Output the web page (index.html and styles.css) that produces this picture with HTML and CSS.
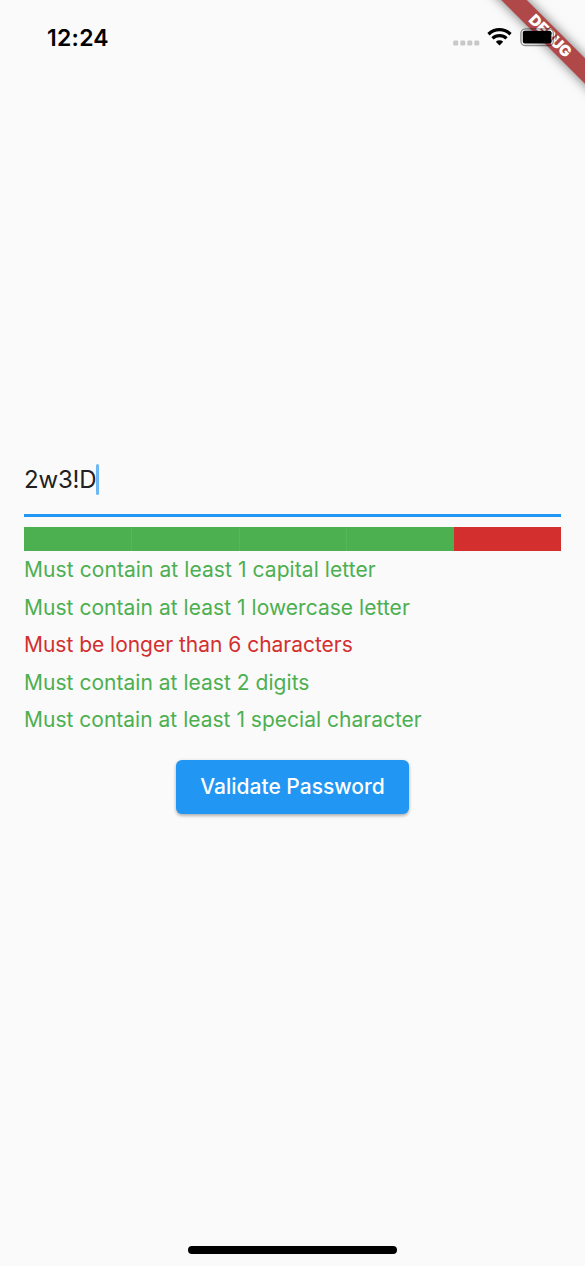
FILE: index.html
```html
<!DOCTYPE html>
<html lang="en">
<head>
<meta charset="utf-8">
<title>Password validator</title>
<link rel="stylesheet" href="styles.css">
</head>
<body>
<div class="screen">
  <header class="status-bar">
    <span class="clock">12:24</span>
    <div class="indicators">
      <svg class="signal" width="27" height="6" viewBox="0 0 27 6"><g fill="#c8c8c8"><rect x=".2" y=".6" width="5" height="5" rx="1.4"/><rect x="7.3" y=".6" width="5" height="5" rx="1.4"/><rect x="14.3" y=".6" width="5" height="5" rx="1.4"/><rect x="21.3" y=".6" width="5" height="5" rx="1.4"/></g></svg>
      <svg class="wifi" width="26" height="19" viewBox="0 0 26 19"><g fill="none" stroke="#000" stroke-width="3.3"><path d="M1.5 7.2a15.7 15.7 0 0 1 22 0"/><path d="M5.5 11.4a10 10 0 0 1 14 0"/></g><path d="M8.8 14.8a5.4 5.4 0 0 1 7.4 0L12.5 18.5Z"/></svg>
      <svg class="battery" width="38" height="19" viewBox="0 0 38 19"><rect x=".9" y=".9" width="32.5" height="16.6" rx="4.6" fill="none" stroke="#000" stroke-opacity=".42" stroke-width="1.4"/><rect x="2.8" y="2.8" width="28.6" height="12.6" rx="2" /><path d="M35.3 6.2c2.4 1 2.4 5 0 6z" opacity=".4"/></svg>
    </div>
  </header>
  <div class="banner"><span>DEBUG</span></div>
  <main class="form">
    <div class="field"><span class="value">2w3!D</span><i class="caret"></i></div>
    <div class="strength">
      <i class="met"></i><i class="met"></i><i class="met"></i><i class="met"></i><i class="unmet"></i>
    </div>
    <ul class="rules">
      <li class="capital">Must contain at least 1 capital letter</li>
      <li class="lower">Must contain at least 1 lowercase letter</li>
      <li class="length failed">Must be longer than 6 characters</li>
      <li class="digits">Must contain at least 2 digits</li>
      <li class="special">Must contain at least 1 special character</li>
    </ul>
    <button class="validate">Validate Password</button>
  </main>
  <div class="home-indicator"></div>
</div>
</body>
</html>
```
FILE: styles.css
```css
* { box-sizing: border-box; }
body { margin: 0; background: #fafafa; font-family: Inter, "Liberation Sans", sans-serif; }
.screen { position: relative; width: 585px; height: 1266px; overflow: hidden; display: flex; flex-direction: column; }
.status-bar { position: relative; z-index: 2; height: 76px; padding: 22px 27px 0 47px; display: flex; justify-content: space-between; align-items: flex-start; }
.clock { padding-top: 1px; font-size: 23px; line-height: 30px; font-weight: 600; letter-spacing: .25px; color: #000; }
.indicators { display: flex; align-items: flex-start; padding-top: 5px; }
.signal { margin-top: 13px; }
.wifi { margin-left: 7px; }
.battery { margin-left: 7px; margin-top: 1px; }
.banner { position: absolute; z-index: 1; left: 449.5px; top: 26.5px; width: 200px; height: 18px; transform: rotate(45deg); background: #b0484a; box-shadow: 0 0 12px rgba(0,0,0,.55); text-align: center; color: #fff; font-size: 15.3px; line-height: 18px; font-weight: 900; }
.form { padding: 376px 24px 0; display: flex; flex-direction: column; }
.field { height: 65px; padding-top: 11.5px; border-bottom: 3px solid #2196f3; display: flex; align-items: flex-start; }
.value { font-size: 24px; line-height: 32px; letter-spacing: -.2px; color: #212121; }
.caret { width: 3px; height: 31px; border-radius: 1.5px; background: #6cb8f5; }
.strength { margin-top: 10px; height: 24px; display: flex; }
.strength i { flex: 1; }
.met { background: #4caf50; }
.met + .met { box-shadow: inset 1px 0 #59b55d; }
.unmet { background: #d32f2f; }
.rules { list-style: none; margin: 0; padding: 0; color: #4caf50; font-size: 21px; }
.rules li { height: 37.5px; line-height: 38px; white-space: nowrap; }
.capital { letter-spacing: .08px; }
.lower { letter-spacing: .04px; }
.length { letter-spacing: -.02px; }
.digits { letter-spacing: .03px; }
.special { letter-spacing: .01px; }
.failed { color: #d32f2f; }
.validate { align-self: center; width: 233px; height: 54px; margin-top: 21px; padding: 0; border: 0; border-radius: 6px; background: #2196f3; color: #fff; font: 500 21px/54px Inter, "Liberation Sans", sans-serif; box-shadow: 0 2px 3px rgba(0,0,0,.2), 0 1px 4px rgba(0,0,0,.14); }
.home-indicator { width: 209px; height: 8px; border-radius: 4px; background: #000; margin: auto auto 12px; }
```
